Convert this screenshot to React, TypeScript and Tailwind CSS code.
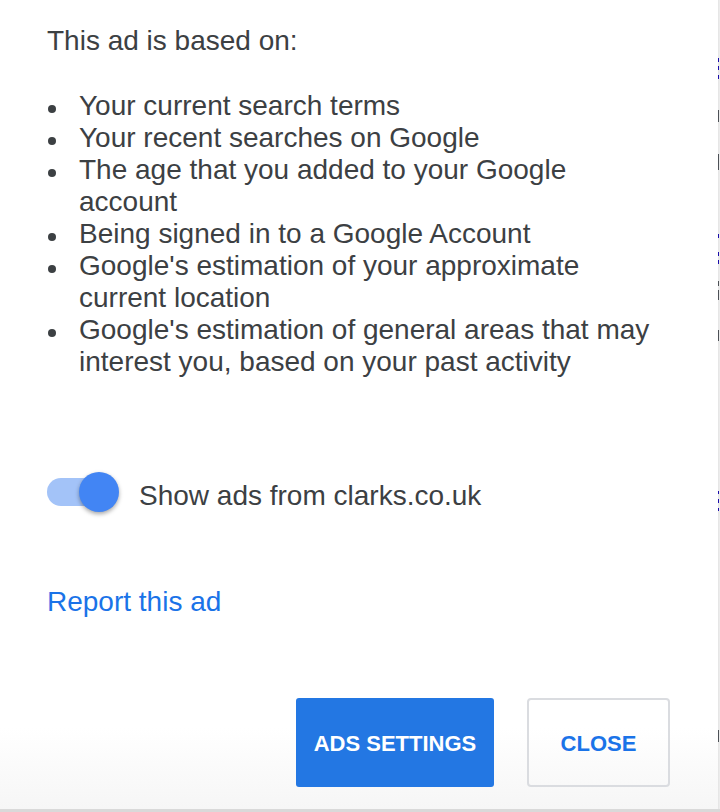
const reasons = [
  ["Your current search terms"],
  ["Your recent searches on Google"],
  ["The age that you added to your Google", "account"],
  ["Being signed in to a Google Account"],
  ["Google's estimation of your approximate", "current location"],
  ["Google's estimation of general areas that may", "interest you, based on your past activity"],
];

// bits of the page behind the dialog, peeking through at the right edge
const edgeBits = [
  "h-[58px]", "h-[4px] bg-[#1a0dab]", "h-[4px]", "h-[4px] bg-[#1a0dab]", "h-[5px]", "h-[4px] bg-[#1a0dab]",
  "h-[31px]", "h-[12px] bg-[#4d5156]", "h-[32px]", "h-[16px] bg-[#4d5156]", "h-[64px]",
  "h-[4px] bg-[#1a0dab]", "h-[14px]", "h-[4px] bg-[#1a0dab]", "h-[4px]", "h-[4px] bg-[#1a0dab]",
  "h-[17px]", "h-[5px] bg-[#4d5156]", "h-[4px]", "h-[10px] bg-[#4d5156]", "h-[30px]",
  "h-[11px] bg-[#4d5156]", "h-[150px]", "h-[3px] bg-[#1a0dab]", "h-[5px]", "h-[4px] bg-[#1a0dab]",
  "h-[5px]", "h-[3px] bg-[#1a0dab]", "h-[219px]", "h-[12px] bg-[#4d5156]",
];

function Toggle() {
  return (
    <div className="relative w-[72px] h-[40px] shrink-0">
      <div className="absolute left-0 top-[6px] w-[66px] h-[28px] rounded-full bg-[#a3c3f8]" />
      <div className="absolute left-[32px] top-0 w-[40px] h-[40px] rounded-full bg-[#4285f4] shadow-[0_2px_4px_rgba(0,0,0,0.35)]" />
    </div>
  );
}

export default function App() {
  return (
    <div className="w-[720px] h-[812px] flex flex-col overflow-hidden" style={{ fontFamily: '"Liberation Sans", Arial, sans-serif' }}>
      <div className="flex h-[809px]">
        <div className="w-[718px] h-full bg-linear-to-b from-white from-90% to-[#f6f6f6] pl-[47px] pr-[48px] pt-[25px] text-[28px] leading-[32px] text-[#3c4043]">
          <p className="mb-[33px]">This ad is based on:</p>

          <ul>
            {reasons.map((lines) => (
              <li key={lines[0]} className="flex">
                <span className="w-[32px] shrink-0">
                  <span className="block mt-[15px] ml-[1px] w-[8px] h-[8px] rounded-full bg-[#3c4043]" />
                </span>
                <span>
                  {lines.map((l) => (
                    <span key={l} className="block">{l}</span>
                  ))}
                </span>
              </li>
            ))}
          </ul>

          <div className="flex items-end mt-[94px]">
            <Toggle />
            <span className="ml-[20px]">Show ads from clarks.co.uk</span>
          </div>

          <div className="mt-[74px]">
            <a className="text-[#1a73e8]">Report this ad</a>
          </div>

          <div className="flex justify-end gap-[33px] mt-[80px]">
            <button className="w-[198px] h-[89px] pt-[3px] rounded-[3px] bg-[#2377e3] text-white text-[22px] font-bold">
              ADS SETTINGS
            </button>
            <button className="w-[143px] h-[89px] pt-[3px] rounded-[4px] border-2 border-[#dadce0] text-[#1a73e8] text-[22px] font-bold">
              CLOSE
            </button>
          </div>
        </div>

        <div className="w-[1px] h-full flex flex-col bg-[#e6e6e6]">
          {edgeBits.map((c, i) => (
            <div key={i} className={c} />
          ))}
        </div>
        <div className="w-[1px] h-full bg-[#ececec]" />
      </div>
      <div className="h-[3px] bg-[#d9d9d9]" />
    </div>
  );
}
